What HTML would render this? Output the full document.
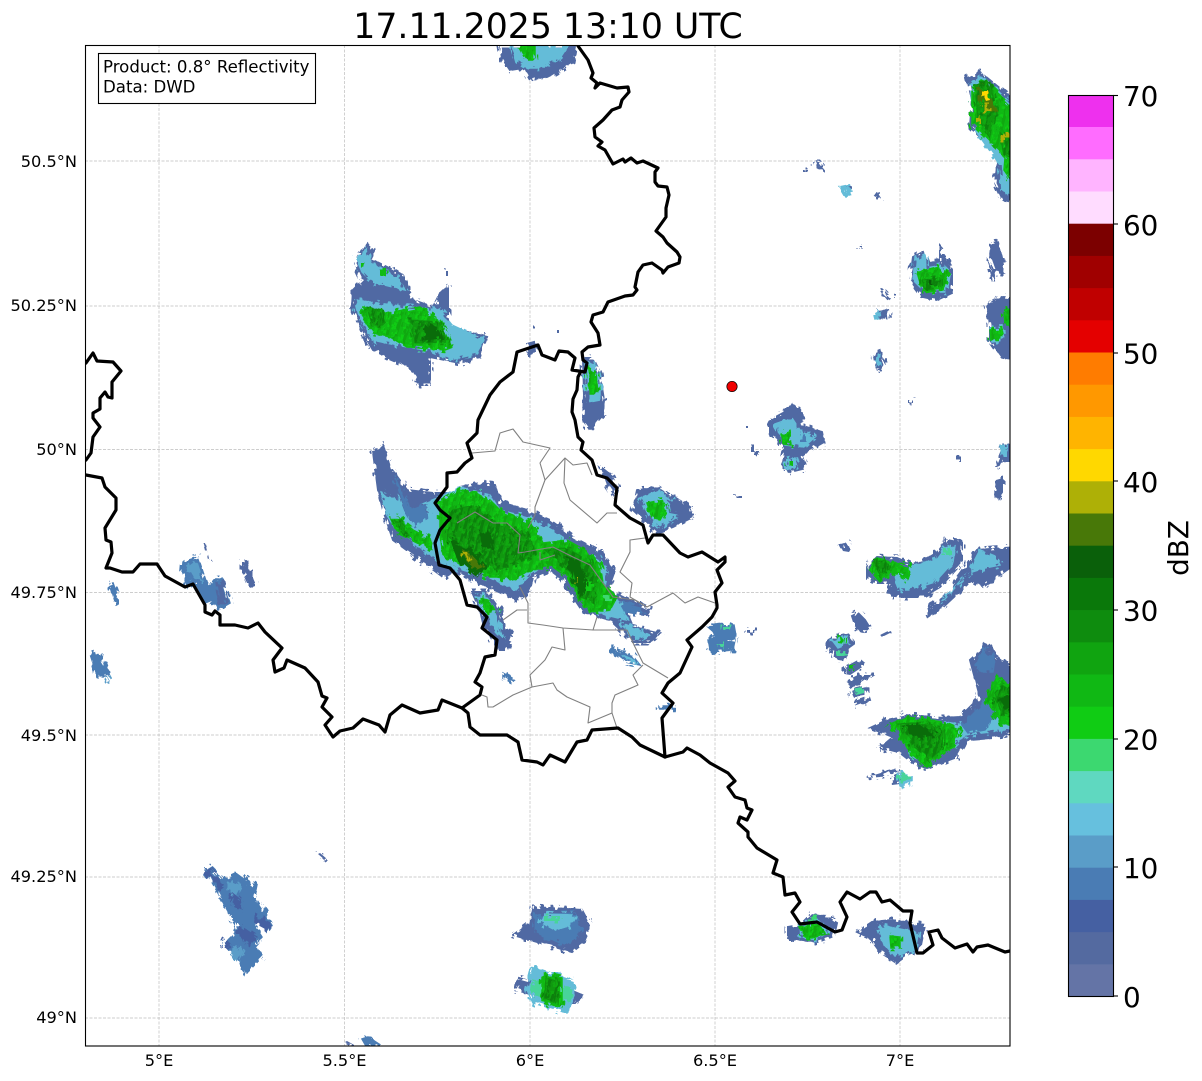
<!DOCTYPE html>
<html><head><meta charset="utf-8"><style>
html,body{margin:0;padding:0;background:#fff}
svg{display:block}
text{font-family:"DejaVu Sans","Liberation Sans",sans-serif;fill:#000}
.a{fill:#5069a3;stroke:#5069a3;stroke-width:2}
.m{fill:#4a7cb4;stroke:#4a7cb4;stroke-width:1.5}
.l{fill:#64bcd8;stroke:#64bcd8;stroke-width:1.5}
.t{fill:#48d49a;stroke:#48d49a;stroke-width:1}
.g{fill:url(#pg);stroke:#10bc14;stroke-width:1.5}
.d{fill:url(#pd);stroke:#0e8e0e;stroke-width:1}
.k{fill:#0a6c0a;stroke:#0a6c0a;stroke-width:1}
.b{fill:none;stroke:#000;stroke-width:3.2;stroke-linejoin:round;stroke-linecap:round}
.c{fill:none;stroke:#808080;stroke-width:1.1;stroke-linejoin:round}
.gr{stroke:#bdbdbd;stroke-width:.7;stroke-dasharray:3 1.5}
</style></head><body>
<svg width="1202" height="1081" viewBox="0 0 1202 1081" xmlns="http://www.w3.org/2000/svg">
<defs>
<clipPath id="map"><rect x="85.5" y="45.5" width="924.5" height="1000.5"/></clipPath>
<pattern id="pg" width="9" height="8" patternUnits="userSpaceOnUse" patternTransform="rotate(15)">
<rect width="9" height="8" fill="#10b814"/><rect width="3" height="8" fill="#10a810"/><rect x="6" y="3" width="3" height="5" fill="#10cc14"/>
</pattern>
<pattern id="pd" width="8" height="9" patternUnits="userSpaceOnUse" patternTransform="rotate(15)">
<rect width="8" height="9" fill="#10980f"/><rect width="3" height="9" fill="#0c800c"/><rect x="5" y="4" width="3" height="5" fill="#10a810"/>
</pattern>
<filter id="jag" filterUnits="userSpaceOnUse" x="0" y="0" width="1202" height="1081" color-interpolation-filters="sRGB">
<feTurbulence type="fractalNoise" baseFrequency="0.22 0.14" numOctaves="1" seed="7" result="n"/>
<feComponentTransfer in="n" result="q">
<feFuncR type="discrete" tableValues="0.2 0.35 0.5 0.65 0.8"/>
<feFuncG type="discrete" tableValues="0.2 0.35 0.5 0.65 0.8"/>
</feComponentTransfer>
<feDisplacementMap in="SourceGraphic" in2="q" scale="16" xChannelSelector="R" yChannelSelector="G"/>
</filter>
</defs>
<rect width="1202" height="1081" fill="#fff"/>
<text x="548" y="38" font-size="34.7" text-anchor="middle">17.11.2025 13:10 UTC</text>

<g class="gr">
<line x1="159" y1="45" x2="159" y2="1046"/><line x1="344.500" y1="45" x2="344.500" y2="1046"/><line x1="530" y1="45" x2="530" y2="1046"/><line x1="715" y1="45" x2="715" y2="1046"/><line x1="900" y1="45" x2="900" y2="1046"/>
<line x1="85" y1="161" x2="1010" y2="161"/><line x1="85" y1="306" x2="1010" y2="306"/><line x1="85" y1="449.500" x2="1010" y2="449.500"/><line x1="85" y1="592.500" x2="1010" y2="592.500"/><line x1="85" y1="735" x2="1010" y2="735"/><line x1="85" y1="877" x2="1010" y2="877"/><line x1="85" y1="1018" x2="1010" y2="1018"/>
</g>

<g clip-path="url(#map)"><g filter="url(#jag)">
<!-- NW big cell -->
<polygon class="a" points="367,243 372,247 373,260 403,275 408,287 413,300 433,307 440,293 448,287 448,327 487,337 480,357 460,363 430,357 430,385 420,385 410,367 387,357 373,350 363,333 352,307 353,290 363,280 355,263"/>
<polygon class="l" points="356,258 366,250 372,264 400,280 405,290 372,282 362,272"/>
<polygon class="l" points="355,300 400,306 440,310 452,325 484,340 476,354 450,360 425,350 396,345 372,340 360,320"/>
<polygon class="g" points="363,307 387,313 420,307 440,320 453,347 445,350 407,347 390,337 373,333 362,317"/>
<polygon class="d" points="367,307 381,310 383,325 372,325"/><polygon class="d" points="410,320 440,322 450,342 415,343"/>
<polygon class="k" points="425,325 438,328 441,338 425,340"/>
<rect x="380" y="268" width="6" height="8" fill="#10bc14"/><rect x="361" y="263" width="5" height="6" fill="#10bc14"/>
<rect x="446" y="268" width="2" height="8" fill="#5069a3"/>

<!-- top -->
<polygon class="a" points="500,46 575,46 572,63 553,75 530,80 523,68 510,70 502,58"/>
<polygon class="l" points="512,46 568,46 560,58 540,68 528,68 516,60"/>
<polygon class="g" points="518,46 535,46 535,60 526,60"/>

<!-- main cell -->
<polygon class="a" points="373,452 383,445 390,467 407,490 433,493 457,493 460,487 480,483 495,485 500,502 527,510 550,520 573,537 603,553 615,570 608,590 623,597 650,610 647,615 627,612 633,627 660,633 650,642 633,642 610,620 583,612 573,597 563,580 550,570 533,577 530,590 520,600 510,597 490,588 473,580 453,570 443,577 420,560 393,540 383,510 378,490"/>
<polygon class="l" points="381,492 395,497 420,505 440,497 460,487 490,495 500,510 530,518 552,530 575,545 598,558 608,572 603,590 620,602 626,620 606,615 590,610 575,590 565,572 550,562 530,575 516,590 490,578 470,572 445,565 420,548 396,530 385,512"/>
<polygon class="a" points="388,465 396,490 418,502 430,510 420,522 405,510"/><polygon class="m" points="395,478 403,495 412,510 425,505 430,517 415,525 405,510"/><polygon class="m" points="620,603 640,608 645,613 625,612"/><polygon class="l" points="620,622 650,635 640,640 630,636"/>
<polygon class="g" points="390,517 398,517 413,530 433,540 433,550 417,543 397,533"/>
<polygon class="d" points="393,518 400,520 411,535 404,536"/>
<polygon class="g" points="440,502 460,490 477,492 490,500 500,510 533,523 543,543 567,540 590,553 600,563 603,583 617,597 610,610 590,612 577,597 567,577 553,567 533,570 522,577 512,580 497,577 487,577 467,567 443,557 440,533 440,517"/>
<polygon class="d" points="450,510 475,505 492,520 530,535 535,555 515,565 495,570 465,555 447,540"/>
<polygon class="d" points="545,550 567,548 590,562 598,585 594,602 580,597 570,572"/>
<polygon class="k" points="450,540 473,550 487,567 477,577 457,560"/>
<polygon class="k" points="566,556 578,562 588,585 582,596 574,580"/>
<polygon class="k" points="478,530 490,534 494,548 483,546"/>
<polygon points="462,549 472,555 483,567 476,570 465,560" fill="#487808"/>
<polygon points="462,551 466,553 470,560 467,561" fill="#aeb006"/>
<rect x="577" y="577" width="3" height="6" fill="#aeb006"/>
<rect x="586" y="584" width="8" height="7" fill="#10cc14"/><rect x="605" y="595" width="7" height="6" fill="#3cd870"/>

<!-- small under main -->
<polygon class="a" points="472,592 487,592 500,610 503,623 512,637 507,650 498,650 483,623 480,610"/>
<polygon class="l" points="476,594 486,596 497,612 500,628 505,640 494,628 484,612"/>
<polygon class="g" points="478,598 488,600 497,612 488,612"/>

<!-- radar edge cell, east of border -->
<polygon class="a" points="583,358 592,358 600,375 604,400 603,415 590,430 583,420 584,395"/>
<polygon class="l" points="585,362 594,362 600,382 600,400 590,402 586,385"/>
<polygon class="g" points="586,366 596,372 598,394 590,394"/>
<polygon class="a" points="602,468 612,476 618,490 616,497 608,485"/>
<polygon class="a" points="637,490 660,488 690,507 693,517 673,527 657,533 647,523 633,510"/>
<polygon class="l" points="640,498 660,490 672,500 680,515 660,528 650,518"/>
<polygon class="g" points="647,503 662,500 667,508 660,520 652,518"/>
<polygon class="a" points="668,501 690,510 690,516 670,512"/>
<polygon class="m" points="708,627 734,625 736,636 724,638 735,640 733,650 710,652 708,640 716,634"/><rect x="723" y="627" width="7" height="3" fill="#48d49a"/><rect x="716" y="644" width="8" height="3" fill="#48d49a"/>
<polygon class="m" points="612,647 632,655 640,665 625,662 612,652"/><polygon class="l" points="622,655 634,660 636,664 626,660"/>
<polygon class="m" points="503,673 512,678 511,681 503,676"/>
<polygon class="m" points="659,706 675,706 675,709 659,709"/>
<rect x="747" y="630" width="10" height="3" fill="#5069a3"/>
<polygon class="a" points="527,344 534,342 535,352 530,354"/>
<rect x="533" y="328" width="2" height="3" fill="#5069a3"/><rect x="557" y="330" width="3" height="3" fill="#5069a3"/>

<!-- Left small -->
<polygon class="m" points="183,562 198,557 208,587 213,580 222,578 230,603 218,610 212,600 205,603 193,582 188,588 182,573"/>
<polygon fill="#5a9dc8" points="186,568 197,560 204,582 192,578"/>
<polygon fill="#5069a3" points="215,582 224,582 229,602 218,606"/>
<polygon fill="#5069a3" points="203,543 205,543 210,562 208,562"/>
<polygon class="a" points="243,560 246,565 255,585 250,587 243,572"/>
<polygon class="m" points="110,584 113,583 120,603 116,605"/>
<polygon class="m" points="90,654 98,652 110,672 103,677 97,675"/><polygon fill="#5a9dc8" points="105,676 107,676 112,685 110,685"/>

<!-- SW cells -->
<polygon class="m" points="205,870 210,867 223,880 238,873 257,887 255,897 272,923 267,930 260,923 253,923 262,937 255,945 262,957 247,973 223,943 232,937 238,928 230,915 218,893"/>
<polygon fill="#4560a2" points="205,870 210,867 224,885 218,889"/><polygon fill="#5a9dc8" points="232,880 244,885 238,896 226,890"/>
<polygon fill="#4560a2" points="232,892 244,902 240,910 230,905"/><polygon fill="#5a9dc8" points="228,953 240,945 245,950 238,962"/>
<polygon fill="#4560a2" points="255,915 272,923 267,930 254,923"/><polygon fill="#4560a2" points="240,925 258,937 250,945 237,935"/><polygon fill="#4560a2" points="225,938 232,945 228,950 222,945"/>
<polygon fill="#5069a3" points="318,854 320,853 327,859 325,860"/>
<polygon class="m" points="362,1039 368,1037 382,1046 366,1046"/><polygon fill="#5069a3" points="345,1042 347,1041 356,1046 352,1046"/>

<polygon class="a" points="533,907 582,910 589,923 585,942 572,952 513,935 530,923"/>
<polygon class="m" points="536,915 575,913 584,930 565,945 535,932"/>
<polygon class="l" points="542,914 575,915 572,925 555,930 540,922"/><rect x="544" y="916" width="16" height="5" fill="#48d49a"/>
<polygon fill="#4a7cb4" points="548,930 575,930 572,940 548,936"/>

<polygon class="a" points="519,978 533,982 533,995 517,990"/><polygon class="a" points="570,990 582,995 575,1003 570,1003"/>
<polygon class="l" points="533,967 573,980 574,998 567,1013 533,1003 527,990"/>
<polygon class="t" points="530,982 572,990 570,1002 532,995"/>
<polygon class="g" points="542,973 562,978 562,1007 542,1003"/>
<polygon class="d" points="546,978 560,982 558,1003 544,998"/>

<polygon class="a" points="788,927 800,925 810,915 825,916 837,923 834,936 818,942 788,938"/>
<polygon class="l" points="798,925 818,920 828,932 816,940 798,936"/>
<polygon class="g" points="798,927 818,924 826,934 812,938 800,935"/><rect x="808" y="917" width="9" height="5" fill="#3cd870"/>

<polygon class="a" points="857,932 872,922 892,920 925,925 920,950 905,955 895,962 880,952 870,938"/>
<polygon class="l" points="878,925 905,930 918,935 915,950 895,956 885,945"/>
<polygon class="g" points="890,936 900,937 900,948 891,948"/>

<!-- NE -->
<polygon class="a" points="967,78 980,72 1018,103 1018,203 1003,200 995,183 997,167 1000,157 970,127 972,100"/>
<polygon class="l" points="970,85 982,76 1018,110 1018,197 1002,190 1000,165 975,130"/>
<polygon class="g" points="972,90 984,80 1018,112 1018,190 1004,170 1005,158 972,125"/>
<polygon class="d" points="975,85 990,82 998,115 990,135 978,120"/><polygon class="d" points="1000,130 1018,145 1018,160 1004,155"/>
<polygon points="978,85 988,90 996,110 988,112 980,100" fill="#487808"/>
<polygon points="982,92 988,90 990,100 986,101" fill="#ffd800"/><rect x="982" y="105" width="7" height="6" fill="#aeb006"/><rect x="976" y="118" width="5" height="6" fill="#aeb006"/>
<rect x="1003" y="132" width="7" height="8" fill="#aeb006"/>

<polygon class="a" points="913,257 923,252 927,263 940,262 940,248 952,267 952,293 937,300 923,297 910,280"/>
<polygon class="l" points="915,260 925,255 926,268 944,265 950,275 947,292 925,292 913,280"/>
<polygon class="g" points="917,272 937,267 948,273 943,290 923,293"/>
<polygon class="d" points="922,280 940,278 940,286 926,290"/><rect x="929" y="280" width="5" height="5" fill="#0a5a0a"/>
<polygon class="a" points="992,243 998,242 1003,265 1002,273 995,272 990,258"/><polygon class="a" points="988,270 993,270 994,278 990,278"/>
<polygon class="a" points="987,305 1000,297 1018,298 1018,360 1003,358 990,340 990,325"/>
<polygon class="l" points="990,328 1002,327 1004,340 992,342"/><polygon class="g" points="990,330 1000,329 1002,338 991,338"/>
<polygon class="g" points="1004,310 1018,308 1018,325 1005,325"/>

<g fill="#5069a3">
<polygon points="813,162 820,162 825,168 825,170 815,168"/><rect x="803" y="170" width="4" height="2"/>
<polygon points="873,194 877,192 881,198 877,200"/><rect x="859" y="246" width="3" height="3"/>
<polygon points="880,291 884,290 892,298 888,301"/><rect x="894" y="294" width="3" height="4"/>
<polygon points="875,311 889,309 890,317 880,320"/>
</g>
<polygon fill="#64bcd8" points="840,186 850,184 853,194 846,196"/><rect x="846" y="186" width="6" height="3" fill="#5069a3"/>
<polygon fill="#64bcd8" points="875,313 880,311 882,318 877,320"/>
<polygon fill="#5069a3" points="873,354 881,351 886,365 881,372 876,370"/><polygon fill="#64bcd8" points="875,358 880,355 882,366 878,369"/>

<!-- middle cell -->
<polygon class="a" points="770,420 785,412 790,404 800,408 803,426 822,432 824,442 810,450 802,456 806,468 790,472 782,465 785,450 778,440 770,435"/>
<polygon class="l" points="775,424 792,418 800,430 815,437 804,447 785,445"/>
<polygon class="g" points="781,434 790,432 791,445 783,444"/><rect x="800" y="434" width="6" height="8" fill="#4a7cb4"/>
<polygon class="l" points="785,460 795,458 798,467 788,470"/><rect x="787" y="461" width="6" height="5" fill="#10bc14"/>
<g fill="#5069a3"><rect x="751" y="447" width="3" height="5"/><rect x="754" y="451" width="3" height="4"/><rect x="746" y="426" width="2" height="2"/><rect x="733" y="494" width="6" height="2"/><rect x="738" y="496" width="4" height="2"/><rect x="908" y="400" width="5" height="3"/><rect x="956" y="454" width="5" height="8"/>
<polygon points="1003,445 1018,442 1018,462 1003,462 998,470 996,462"/><polygon points="996,480 1003,478 1003,495 998,502 994,495"/></g>
<rect x="1002" y="447" width="5" height="10" fill="#64bcd8"/>

<!-- E cells -->
<polygon fill="#5069a3" points="840,545 847,542 852,547 849,552 843,551"/>
<polygon class="a" points="867,567 877,557 897,558 913,565 937,553 947,540 962,543 962,563 940,587 923,597 903,597 887,595 892,583 877,583 867,577"/>
<polygon class="l" points="895,575 912,566 935,560 946,545 955,548 953,562 935,582 910,590 898,590"/>
<polygon class="g" points="868,568 877,558 893,562 911,566 908,580 893,572 880,582"/>
<polygon class="d" points="873,562 885,560 890,570 880,575"/>
<rect x="943" y="548" width="9" height="7" fill="#48d49a"/>
<polygon class="a" points="957,577 977,550 1018,547 1018,562 983,587 972,580 940,610 930,617 927,610 953,590"/>
<polygon class="l" points="972,565 980,550 995,556 1000,565 985,568 972,572"/>
<polygon fill="#64bcd8" points="960,580 970,572 945,600 940,602"/>

<polygon class="a" points="852,616 858,613 865,620 870,628 860,630 855,625"/>
<polygon class="a" points="825,642 832,638 848,634 855,643 848,648 845,660 832,658 833,650 826,648"/>
<polygon class="l" points="832,640 845,636 848,644 838,648"/><polygon fill="#10bc14" points="837,637 845,638 844,644 838,643"/><polygon fill="#48d49a" points="838,650 846,652 844,656 838,656"/>
<polygon class="a" points="845,668 860,660 865,664 850,674 845,673"/><polygon fill="#10bc14" points="847,666 856,664 854,671 849,671"/>
<polygon class="a" points="846,682 858,676 872,676 860,684 852,686"/>
<polygon class="a" points="851,692 866,688 866,694 853,696"/><polygon fill="#48d49a" points="854,691 864,689 864,693 856,695"/>
<polygon class="a" points="855,702 869,697 870,700 856,705"/>
<polygon fill="#5069a3" points="880,635 888,631 890,633 882,637"/>

<polygon class="a" points="887,720 910,715 943,718 960,717 980,697 970,660 987,645 997,657 1018,670 1018,732 993,738 967,740 957,757 927,768 913,763 900,753 880,748 893,737 870,728"/>
<polygon class="l" points="895,725 910,718 945,722 965,725 985,705 1000,690 1018,690 1018,728 990,732 965,735 950,750 927,765 910,755 900,735"/>
<polygon class="m" points="962,725 985,702 995,716 985,730 968,733"/>
<polygon class="g" points="888,725 907,717 943,722 962,730 950,750 927,767 907,750 897,730"/>
<polygon class="d" points="900,724 925,722 945,730 945,745 930,760 912,745"/>
<polygon class="k" points="905,726 922,725 935,735 915,738"/>
<polygon class="m" points="975,665 985,650 995,658 993,672 980,672"/>
<polygon class="g" points="985,700 997,677 1018,687 1018,727 1000,723"/>
<polygon class="d" points="993,695 1002,685 1018,695 1018,720 1003,715"/>
<polygon class="k" points="998,700 1008,695 1018,705 1005,710"/>
<polygon fill="#5069a3" points="865,777 885,771 900,768 900,771 880,777 868,778"/>
<polygon fill="#5069a3" points="890,778 898,776 900,784 892,785"/><polygon class="l" points="898,773 912,776 912,783 900,786"/><rect x="898" y="775" width="13" height="6" fill="#48d49a"/>
</g></g>

<!-- cantons -->
<g clip-path="url(#map)">
<polyline class="c" points="472,453 495,451 500,433 513,429 523,442 550,448 540,463 545,480 535,507 535,515 528,528"/>
<polyline class="c" points="545,480 565,458 573,465 587,463 592,475"/>
<polyline class="c" points="565,458 564,483 570,500 597,523 607,513 617,513"/>
<polyline class="c" points="645,538 630,540 630,552 620,572 632,583 630,597 647,607 673,593 685,603 698,597 715,603"/>
<polyline class="c" points="457,523 475,512 493,523 507,523 520,535 518,553 525,552 553,547 573,557 590,565 613,597 635,600 647,607"/>
<polyline class="c" points="540,552 540,560 555,555"/>
<polyline class="c" points="520,587 528,603 528,623 543,625 563,628 593,630 597,617"/>
<polyline class="c" points="593,630 627,630 635,647 643,663 668,678"/>
<polyline class="c" points="503,620 517,610 527,610"/>
<polyline class="c" points="563,628 565,650 552,647 545,660 530,675 532,687 513,695 493,707 488,707 487,697 482,695"/>
<polyline class="c" points="532,687 553,683 557,690 567,697 590,707 588,723 612,713 617,728"/>
<polyline class="c" points="612,713 612,703 615,695 638,685 633,675 643,665"/>
</g>

<!-- borders -->
<g clip-path="url(#map)">
<polyline class="b" points="578,46 588,60 593,73 591,78 597,83 595,88 600,83 617,88 628,87 629,92 622,100 620,107 612,110 603,120 594,128 595,137 602,142 598,146 605,150 613,164 623,159 625,162 631,158 637,163 643,161 658,168 655,172 655,182 658,186 667,187 669,195 666,208 666,217 656,231 663,237 667,243 677,252 680,257 679,263 668,267 663,273 662,270 652,263 643,265 638,272 635,287 637,290 633,295 625,296 608,302 603,312 593,315 591,322 598,333 600,345 588,347 582,352 583,360 587,363 585,372 572,370 575,358 568,352 559,351 555,360 542,355 538,345 517,352 513,372 500,382 490,395 478,420 477,433 467,443 472,458 465,463 457,472 447,473 447,487 435,503 440,510 450,518 440,530 435,543 439,565 450,568 460,580 467,605 477,607 487,617 482,628 497,640 495,655 485,657 480,673 475,682 482,687 480,695 462,708 468,713 470,727 480,735 507,735 518,742 522,760 537,762 543,765 550,755 565,762 577,742 587,740 592,730 618,728 632,737 640,745 665,757"/>
<polyline class="b" points="580,373 578,377 577,390 573,399 572,412 575,420 578,437 583,442 581,450 592,460 597,475 607,478 617,488 615,505 630,518 643,525 648,543 653,535 663,535 680,553 688,557 702,552 710,557 718,562 725,557 725,562 717,570 722,583 715,592 717,605 717,608 712,617 702,627 687,640 692,647 680,673 668,683 662,693 673,703 662,718 665,757"/>
<polyline class="b" points="86,475 102,478 105,487 116,498 116,510 105,528 106,540 111,542 112,553 106,568 110,568 122,572 133,572 140,564 157,564 165,576 185,587 193,584 205,605 205,612 212,615 215,611 220,615 220,625 235,625 248,628 258,623 265,632 282,648 273,660 275,672 284,668 287,660 305,668 318,682 322,696 327,698 322,707 332,717 325,725 333,737 340,731 353,728 363,719 379,725 385,732 390,715 402,705 420,713 438,710 442,700 462,708"/>
<polyline class="b" points="86,363 93,353 97,361 113,362 121,371 112,382 112,398 108,397 105,392 100,398 100,409 93,413 93,418 100,427 93,437 91,453 86,460"/>
<polyline class="b" points="665,757 683,752 687,748 700,755 710,763 728,773 735,781 728,787 735,797 745,800 747,808 752,810 747,820 740,817 738,823 748,832 748,837 757,848 777,860 773,873 783,877 785,895 795,893 800,902 792,912 800,924 817,922 835,932 842,930 847,917 840,902 847,892 860,899 870,892 876,892 882,902 890,900 903,911 912,911 910,923 917,953 923,953 933,945 929,932 938,930 942,938 955,948 967,944 973,952 977,947 988,945 1005,952 1010,951"/>
</g>

<circle cx="732" cy="386.500" r="5.200" fill="#f00000" stroke="#000" stroke-width=".7"/>
<rect x="85.500" y="45.500" width="924.500" height="1000.500" fill="none" stroke="#000" stroke-width="1.100"/>

<rect x="98.500" y="53.500" width="217" height="50" fill="#fff" stroke="#000" stroke-width="1.100"/>
<text x="103" y="72.500" font-size="16.600">Product: 0.8° Reflectivity</text>
<text x="103" y="92.500" font-size="16.600">Data: DWD</text>

<g font-size="16.200" text-anchor="end">
<text x="77" y="167">50.5°N</text><text x="77" y="311">50.25°N</text><text x="77" y="455">50°N</text><text x="77" y="598">49.75°N</text><text x="77" y="741">49.5°N</text><text x="77" y="882">49.25°N</text><text x="77" y="1023">49°N</text>
</g>
<g font-size="16.200" text-anchor="middle">
<text x="159" y="1066">5°E</text><text x="344.500" y="1066">5.5°E</text><text x="530" y="1066">6°E</text><text x="715" y="1066">6.5°E</text><text x="900" y="1066">7°E</text>
</g>

<!-- colorbar -->
<g>
<rect x="1068" y="963.800" width="45" height="32.700" fill="#6474a6"/>
<rect x="1068" y="931.600" width="45" height="32.700" fill="#546aa0"/>
<rect x="1068" y="899.400" width="45" height="32.700" fill="#4560a2"/>
<rect x="1068" y="867.200" width="45" height="32.700" fill="#4a7cb4"/>
<rect x="1068" y="835" width="45" height="32.700" fill="#5a9dc8"/>
<rect x="1068" y="802.800" width="45" height="32.700" fill="#66c0de"/>
<rect x="1068" y="770.600" width="45" height="32.700" fill="#5fd8c0"/>
<rect x="1068" y="738.400" width="45" height="32.700" fill="#3cd870"/>
<rect x="1068" y="706.200" width="45" height="32.700" fill="#10cc14"/>
<rect x="1068" y="674" width="45" height="32.700" fill="#10b814"/>
<rect x="1068" y="641.800" width="45" height="32.700" fill="#10a410"/>
<rect x="1068" y="609.600" width="45" height="32.700" fill="#0e8c0e"/>
<rect x="1068" y="577.400" width="45" height="32.700" fill="#0a780a"/>
<rect x="1068" y="545.200" width="45" height="32.700" fill="#0a600a"/>
<rect x="1068" y="513" width="45" height="32.700" fill="#487808"/>
<rect x="1068" y="480.800" width="45" height="32.700" fill="#aeb006"/>
<rect x="1068" y="448.600" width="45" height="32.700" fill="#ffd800"/>
<rect x="1068" y="416.400" width="45" height="32.700" fill="#ffb400"/>
<rect x="1068" y="384.200" width="45" height="32.700" fill="#ff9800"/>
<rect x="1068" y="352" width="45" height="32.700" fill="#ff7c00"/>
<rect x="1068" y="319.800" width="45" height="32.700" fill="#e40000"/>
<rect x="1068" y="287.600" width="45" height="32.700" fill="#c00000"/>
<rect x="1068" y="255.400" width="45" height="32.700" fill="#a00000"/>
<rect x="1068" y="223.200" width="45" height="32.700" fill="#7c0000"/>
<rect x="1068" y="191" width="45" height="32.700" fill="#ffdcff"/>
<rect x="1068" y="158.800" width="45" height="32.700" fill="#ffb4ff"/>
<rect x="1068" y="126.600" width="45" height="32.700" fill="#ff6cff"/>
<rect x="1068" y="95" width="45" height="32" fill="#ee30ee"/>
</g>
<rect x="1068.500" y="95.500" width="45" height="901" fill="none" stroke="#000" stroke-width="1.100"/>
<g stroke="#000" stroke-width="1.100">
<line x1="1113" y1="95.500" x2="1118" y2="95.500"/><line x1="1113" y1="224" x2="1118" y2="224"/><line x1="1113" y1="353" x2="1118" y2="353"/><line x1="1113" y1="481" x2="1118" y2="481"/><line x1="1113" y1="610" x2="1118" y2="610"/><line x1="1113" y1="739" x2="1118" y2="739"/><line x1="1113" y1="867" x2="1118" y2="867"/><line x1="1113" y1="996" x2="1118" y2="996"/>
</g>
<g font-size="27.800">
<text x="1123" y="106">70</text><text x="1123" y="235">60</text><text x="1123" y="363.500">50</text><text x="1123" y="492">40</text><text x="1123" y="620.500">30</text><text x="1123" y="749.500">20</text><text x="1123" y="878">10</text><text x="1123" y="1007">0</text>
</g>
<text transform="translate(1188,548) rotate(-90)" font-size="27.800" text-anchor="middle">dBZ</text>
</svg>
</body></html>
